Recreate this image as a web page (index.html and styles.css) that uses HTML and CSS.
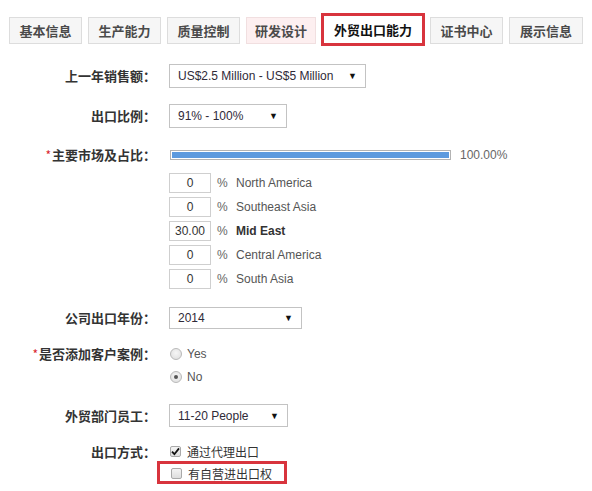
FILE: index.html
```html
<!DOCTYPE html>
<html lang="zh-CN">
<head>
<meta charset="utf-8">
<title>外贸出口能力</title>
<link rel="stylesheet" href="styles.css">
</head>
<body>
<div class="tabs">
  <div class="tab w73">基本信息</div>
  <div class="tab w73">生产能力</div>
  <div class="tab w73">质量控制</div>
  <div class="tab w70 pink">研发设计</div>
  <div class="tab active">外贸出口能力</div>
  <div class="tab w73">证书中心</div>
  <div class="tab w74">展示信息</div>
</div>

<div class="form">
  <div class="row r1">
    <div class="label">上一年销售额：</div>
    <div class="control">
      <div class="select s1"><span>US$2.5 Million - US$5 Million</span><span class="arrow">▼</span></div>
    </div>
  </div>

  <div class="row r2">
    <div class="label">出口比例：</div>
    <div class="control">
      <div class="select s2"><span>91% - 100%</span><span class="arrow">▼</span></div>
    </div>
  </div>

  <div class="row r3">
    <div class="label lh20"><span class="req">*</span>主要市场及占比：</div>
    <div class="control">
      <div class="barline">
        <div class="bar"><div class="fill"></div></div>
        <span class="pct">100.00%</span>
      </div>
      <div class="markets">
        <div class="market"><div class="num">0</div><span class="per">%</span><span class="mname">North America</span></div>
        <div class="market"><div class="num">0</div><span class="per">%</span><span class="mname">Southeast Asia</span></div>
        <div class="market"><div class="num">30.00</div><span class="per">%</span><span class="mname bold">Mid East</span></div>
        <div class="market"><div class="num">0</div><span class="per">%</span><span class="mname">Central America</span></div>
        <div class="market"><div class="num">0</div><span class="per">%</span><span class="mname">South Asia</span></div>
      </div>
    </div>
  </div>

  <div class="row r4">
    <div class="label lh22">公司出口年份：</div>
    <div class="control">
      <div class="select s4"><span>2014</span><span class="arrow">▼</span></div>
    </div>
  </div>

  <div class="row r5">
    <div class="label lh20"><span class="req">*</span>是否添加客户案例：</div>
    <div class="control">
      <div class="radios">
        <div class="opt"><span class="radio"></span><span class="otext">Yes</span></div>
        <div class="opt"><span class="radio checked"></span><span class="otext">No</span></div>
      </div>
    </div>
  </div>

  <div class="row r6">
    <div class="label lh23">外贸部门员工：</div>
    <div class="control">
      <div class="select s6"><span>11-20 People</span><span class="arrow">▼</span></div>
    </div>
  </div>

  <div class="row r7">
    <div class="label lh19">出口方式：</div>
    <div class="control">
      <div class="checks">
        <div class="opt c1"><span class="check on"><svg width="9" height="9" viewBox="0 0 9 9"><path d="M1 4.6 L3.4 7.2 L8 1.4" fill="none" stroke="#111" stroke-width="1.8"/></svg></span><span class="ctext">通过代理出口</span></div>
        <div class="opt highlight"><span class="check"></span><span class="ctext">有自营进出口权</span></div>
      </div>
    </div>
  </div>
</div>
</body>
</html>
```
FILE: styles.css
```css
* { box-sizing: border-box; }
body {
  margin: 0;
  background: #fff;
  font-family: "Liberation Sans", Arial, "Noto Sans CJK SC", sans-serif;
  color: #333;
}
.tabs {
  display: flex;
  align-items: flex-start;
  padding: 13px 0 0 9px;
  height: 46px;
}
.tab {
  height: 27px;
  margin-top: 4px;
  margin-right: 6px;
  border: 1px solid #dddddd;
  background: #f6f6f6;
  font-family: "Noto Sans CJK SC", sans-serif;
  font-weight: 700;
  font-size: 13px;
  color: #4a4a4a;
  display: flex;
  align-items: center;
  justify-content: center;
}
.w73 { width: 73px; }
.w74 { width: 74px; }
.w70 { width: 70px; margin-right: 5px; }
.tab.pink { background: #fdeff0; border-color: #f1dfe0; }
.tab.active {
  width: 104px;
  height: 33px;
  margin-top: 0;
  margin-right: 5px;
  border: 3px solid #d8343d;
  background: #fff;
  color: #111;
  font-size: 13px;
}
.form { display: flex; flex-direction: column; }
.row { display: flex; align-items: flex-start; }
.label {
  width: 156px;
  margin-right: 13px;
  text-align: right;
  font-family: "Noto Sans CJK SC", sans-serif;
  font-weight: 700;
  font-size: 13px;
  line-height: 24px;
  color: #333;
  white-space: nowrap;
}
.lh19 { line-height: 19px; }
.lh20 { line-height: 20px; }
.lh22 { line-height: 22px; }
.lh23 { line-height: 23px; }
.req { color: #d9232e; font-weight: 400; font-size: 12px; margin-right: 1px; }
.r1 { margin-top: 18px; }
.r2 { margin-top: 16px; }
.r3 { margin-top: 17px; }
.r4 { margin-top: 18px; }
.r5 { margin-top: 15px; }
.r6 { margin-top: 17px; }
.r7 { margin-top: 15px; }
.select {
  display: flex;
  align-items: center;
  justify-content: space-between;
  height: 24px;
  padding: 0 8px 0 8px;
  border: 1px solid #c3c3c3;
  background: #fff;
  font-size: 12px;
  color: #2f2a38;
}
.arrow { font-size: 9px; color: #111; }
.s1 { width: 197px; }
.s2 { width: 118px; }
.s4 { width: 133px; height: 22px; }
.s6 { width: 119px; height: 23px; }
.barline { display: flex; align-items: center; height: 20px; }
.bar {
  width: 281px;
  height: 10px;
  margin-left: 1px;
  border: 1px solid #b3b3b3;
  padding: 1px;
  background: #fff;
}
.fill { width: 100%; height: 100%; background: #5d9ade; }
.pct { margin-left: 9px; font-size: 12px; color: #666; }
.markets { display: flex; flex-direction: column; gap: 4px; margin-top: 8px; }
.market { display: flex; align-items: center; height: 20px; font-size: 12px; color: #555; }
.num {
  width: 42px;
  height: 20px;
  border: 1px solid #cfcfcf;
  text-align: center;
  line-height: 18px;
  color: #333;
}
.per { margin-left: 6px; width: 19px; color: #666; }
.mname { color: #555; }
.mname.bold { font-weight: 700; color: #333; }
.radios { display: flex; flex-direction: column; gap: 3px; }
.opt { display: flex; align-items: center; height: 20px; }
.radio {
  width: 12px;
  height: 12px;
  margin-left: 1px;
  border-radius: 50%;
  border: 1px solid #b9b9b9;
  background: radial-gradient(circle at 50% 40%, #f6f6f6, #dcdcdc);
  position: relative;
}
.radio.checked::after {
  content: "";
  position: absolute;
  left: 3px; top: 3px;
  width: 4px; height: 4px;
  border-radius: 50%;
  background: #555;
}
.otext { margin-left: 5px; font-size: 12px; color: #555; }
.checks { display: flex; flex-direction: column; }
.c1 { height: 19px; }
.check {
  width: 11px;
  height: 11px;
  margin-left: 1px;
  border: 1px solid #a9a9a9;
  border-radius: 2px;
  background: linear-gradient(#f4f4f4, #dedede);
  display: flex;
  align-items: center;
  justify-content: center;
}
.ctext {
  margin-left: 6px;
  font-family: "Noto Sans CJK SC", sans-serif;
  font-size: 12px;
  color: #333;
}
.highlight {
  width: 130px;
  height: 23px;
  margin-left: -12px;
  padding: 2px 0 0 10px;
  border: 3px solid #d8343d;
}
```
